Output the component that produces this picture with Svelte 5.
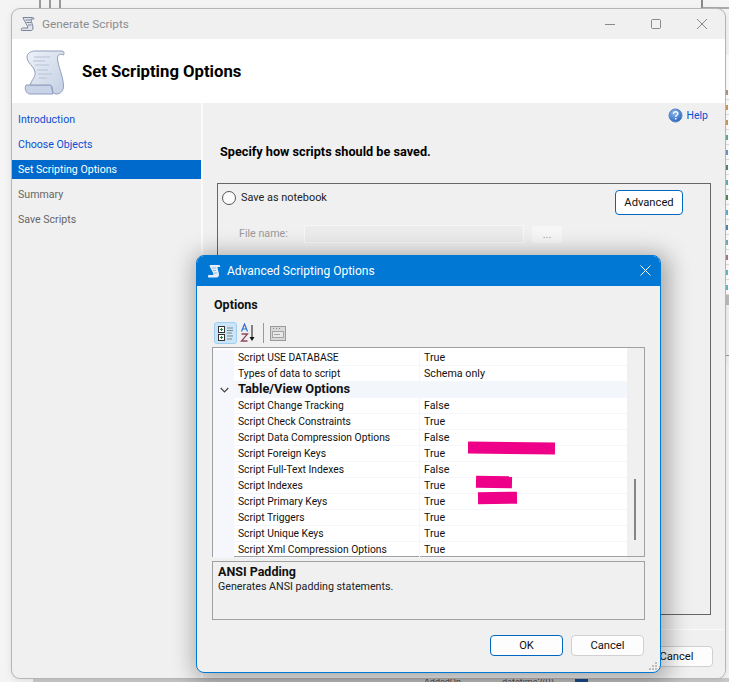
<script>
  const steps = [
    { label: 'Introduction', cls: 'link' },
    { label: 'Choose Objects', cls: 'link' },
    { label: 'Set Scripting Options', cls: 'active' },
    { label: 'Summary', cls: '' },
    { label: 'Save Scripts', cls: '' }
  ];
  const rows = [
    { n: 'Script USE DATABASE', v: 'True' },
    { n: 'Types of data to script', v: 'Schema only' },
    { n: 'Table/View Options', head: true },
    { n: 'Script Change Tracking', v: 'False' },
    { n: 'Script Check Constraints', v: 'True' },
    { n: 'Script Data Compression Options', v: 'False' },
    { n: 'Script Foreign Keys', v: 'True' },
    { n: 'Script Full-Text Indexes', v: 'False' },
    { n: 'Script Indexes', v: 'True' },
    { n: 'Script Primary Keys', v: 'True' },
    { n: 'Script Triggers', v: 'True' },
    { n: 'Script Unique Keys', v: 'True' },
    { n: 'Script Xml Compression Options', v: 'True' }
  ];
  const ticks = ['#a98','#c96','#c96','#6a8','#69c','#586','#6ab','#585','#6ac','#58a','#7ab','#a78','#6bb','#6bb'];
</script>

<div class="desk">
  <div class="bars"><i></i><i></i><i></i></div>
  <div class="corner"></div>
  <div class="strip">
    <div class="strip-top"></div>
    {#each ticks as t}
      <div class="tick"><b style="background:{t}"></b></div>
    {/each}
    <div class="strip-end"></div>
  </div>
  <div class="under">
    <span class="u1">AddedOn</span><span class="u2">datetime2(0)</span><span class="u3"></span>
  </div>

  <section class="win">
    <header class="title">
      <svg class="ttl-ic" width="16" height="16" viewBox="0 0 16 16">
        <path d="M3 1.500h9.500c1 0 1.500.6 1.500 1.500h-3c.2 3 2 6 2 9 0 1.500-.8 2.500-2 2.500H1.500c-.6-1.200-.2-2.500 1-2.500h5.500C7.500 9 4.500 6 3 1.500z" fill="#dfe4ee" stroke="#7a8496"/>
        <path d="M5.500 4h5M6.500 6.500h4.500M8 9h3.500" stroke="#7a8496"/>
      </svg>
      <span class="ttl-text">Generate Scripts</span>
      <div class="caps">
        <svg width="12" height="12" viewBox="0 0 12 12"><path d="M1 6.500h10" stroke="#8a8a8a"/></svg>
        <svg width="12" height="12" viewBox="0 0 12 12"><rect x="1.500" y="1.500" width="9" height="9" rx="1" fill="none" stroke="#8a8a8a"/></svg>
        <svg width="12" height="12" viewBox="0 0 12 12"><path d="M1 1l10 10M11 1L1 11" stroke="#8a8a8a"/></svg>
      </div>
    </header>
    <div class="banner">
      <svg class="scroll" width="42" height="46" viewBox="0 0 42 46">
        <defs>
          <linearGradient id="sg" x1="0" x2="1" y1="0" y2="1">
            <stop offset="0" stop-color="#eef2f9"/><stop offset="1" stop-color="#c3cfe3"/>
          </linearGradient>
        </defs>
        <path d="M2 36h25l2 9H6c-4 0-6-6-4-9z" fill="#c9d4e8" stroke="#8f9dbb"/>
        <path d="M11 2h27c2 0 2.500 2 1.500 4-3-1.500-6-.5-6 3 0 7 6 19 6 28 0 5-3 8-7 8-3 0-4-2-4-5 0-2-1-4-3-4H6c2-6 6-8 5-13C10 17 3 14 3 8c0-3 3-6 8-6z" fill="url(#sg)" stroke="#8f9dbb"/>
        <path d="M10 8h16M9 12h12M11 16h14M13 21h11M14 25h14M15 29h8" stroke="#b5c1d6" stroke-width="1.200"/>
      </svg>
      <h1>Set Scripting Options</h1>
    </div>
    <div class="main">
      <nav class="side">
        {#each steps as s}
          <div class="step {s.cls}">{s.label}</div>
        {/each}
      </nav>
      <div class="content">
        <div class="help">
          <svg width="15" height="15" viewBox="0 0 15 15">
            <defs><radialGradient id="hg" cx=".4" cy=".3" r=".8"><stop offset="0" stop-color="#8fb8ee"/><stop offset="1" stop-color="#1f5cb8"/></radialGradient></defs>
            <circle cx="7.500" cy="7.500" r="6.500" fill="url(#hg)" stroke="#5a83c4"/>
            <path d="M5.300 5.800c.2-1.400 1.200-2 2.300-2 1.300 0 2.200.8 2.200 1.900 0 1.600-2.100 1.600-2.100 3.200" fill="none" stroke="#fff" stroke-width="1.400"/>
            <rect x="6.900" y="10" width="1.500" height="1.500" fill="#fff"/>
          </svg>
          <span>Help</span>
        </div>
        <p class="spec">Specify how scripts should be saved.</p>
        <div class="group">
          <div class="opt-row">
            <span class="radio"></span>
            <span class="opt">Save as notebook</span>
            <button class="btn adv">Advanced</button>
          </div>
          <div class="file-row">
            <span class="fname">File name:</span>
            <span class="input"></span>
            <span class="dots">...</span>
          </div>
        </div>
        <div class="foot-rule"></div>
        <div class="foot"><button class="btn cancel-back">Cancel</button></div>
      </div>
    </div>
  </section>

  <section class="dlg">
    <header class="dlg-title">
      <svg width="16" height="16" viewBox="0 0 16 16">
        <path d="M4 2h9c1 0 1.500 1 1 2h-2.500c0 3 1.500 5 1.500 7.500 0 1.800-.8 3-2.300 3H2.500C1.500 14 1.800 12 3 12h4.500C7.500 9 4.500 6 3.500 2.500z" fill="#e6eff9"/>
        <path d="M6 5h4M7 7.500h3M8 10h3" stroke="#8fb4dc"/>
      </svg>
      <span>Advanced Scripting Options</span>
      <svg class="dlg-x" width="11" height="11" viewBox="0 0 11 11"><path d="M.5.500l10 10M10.500.500l-10 10" stroke="#fff"/></svg>
    </header>
    <div class="dlg-body">
      <div class="opts">Options</div>
      <div class="tools">
        <span class="tool on">
          <svg width="18" height="18" viewBox="0 0 18 18">
            <rect x="1.500" y="2.500" width="6" height="6" fill="#fff" stroke="#333"/>
            <rect x="1.500" y="10.500" width="6" height="6" fill="#fff" stroke="#333"/>
            <path d="M3 5.500h3M4.500 4v3M3 13.500h3M4.500 12v3" stroke="#1c8a3a"/>
            <path d="M10 4h6M10 6.500h6M10 9h5M10 12h6M10 15h5" stroke="#7a8a8a"/>
          </svg>
        </span>
        <span class="tool">
          <svg width="18" height="20" viewBox="0 0 18 20">
            <path d="M1.500 8.500L4.500 1l3 7.500M2.800 6h3.400" fill="none" stroke="#2a6fd0" stroke-width="1.200"/>
            <path d="M1.500 11h6l-6 7h6" fill="none" stroke="#8a4a5a" stroke-width="1.300"/>
            <path d="M12 2v13" stroke="#111"/>
            <path d="M9.500 14l2.500 4 2.500-4z" fill="#111"/>
          </svg>
        </span>
        <span class="sep"></span>
        <span class="pages">
          <svg width="16" height="15" viewBox="0 0 16 15">
            <rect x=".5" y=".5" width="15" height="14" fill="#d8d8d8" stroke="#9a9a9a"/>
            <path d="M3 2.500h1M6 2.500h1M9 2.500h1" stroke="#888"/>
            <rect x="2.500" y="5.500" width="11" height="6" fill="#e8e8e8" stroke="#a5a5a5"/>
            <path d="M4 8.500h6" stroke="#a5a5a5"/>
          </svg>
        </span>
      </div>
      <div class="grid">
        <div class="table">
          {#each rows as r}
            {#if r.head}
              <div class="row head">
                <span class="gut">
                  <svg width="9" height="6" viewBox="0 0 9 6"><path d="M.7 1l3.800 3.800L8.300 1" fill="none" stroke="#444" stroke-width="1.200"/></svg>
                </span>
                <span class="hname">{r.n}</span>
              </div>
            {:else}
              <div class="row">
                <span class="gut"></span>
                <span class="name">{r.n}</span>
                <span class="val">{r.v}</span>
              </div>
            {/if}
          {/each}
          <div class="marks">
            <i class="m1"></i><i class="m2"></i><i class="m3"></i>
          </div>
        </div>
        <div class="track"><span class="thumb"></span></div>
      </div>
      <div class="desc">
        <strong>ANSI Padding</strong>
        <span>Generates ANSI padding statements.</span>
      </div>
      <div class="actions">
        <button class="btn ok">OK</button>
        <button class="btn plain">Cancel</button>
      </div>
    </div>
    <svg class="grip" width="9" height="9" viewBox="0 0 9 9" fill="#bdbdbd">
      <rect x="6" y="0" width="2" height="2"/><rect x="3" y="3" width="2" height="2"/><rect x="6" y="3" width="2" height="2"/>
      <rect x="0" y="6" width="2" height="2"/><rect x="3" y="6" width="2" height="2"/><rect x="6" y="6" width="2" height="2"/>
    </svg>
  </section>
</div>

<style>
  :global(body) { margin: 0; }
  * { box-sizing: border-box; }
  .desk {
    position: relative; width: 729px; height: 682px; overflow: hidden;
    background: #f4f4f4;
    font-family: Roboto, "Noto Sans", sans-serif; font-size: 10.700px; color: #111;
  }
  .bars { position: absolute; left: 39px; top: 0; display: flex; gap: 8px; }
  .bars i { width: 2px; height: 9px; background: #9a9a9a; }
  .corner { position: absolute; left: 701px; top: 0; width: 28px; height: 9px; border-left: 2px solid #888; border-bottom: 2px solid #aaa; }
  .strip { position: absolute; left: 725px; top: 55px; width: 4px; display: flex; flex-direction: column; background: #fff; }
  .strip-top { height: 30px; }
  .tick { height: 15px; border-bottom: 1px solid #ddd; padding-top: 5px; }
  .tick b { display: block; width: 3px; height: 5px; }
  .strip-end { height: 70px; background: linear-gradient(#bbb 0 10px, #f0f0f0 10px 60px, #999 60px 61px, #f0f0f0 61px); }
  .under { position: absolute; left: 33px; top: 678px; width: 696px; height: 4px; background: #c9c9c9; overflow: hidden; }
  .under span { position: absolute; top: 0; font-size: 9px; line-height: 9px; color: #5a4a4a; }
  .u1 { left: 391px; } .u2 { left: 469px; }
  .under .u3 { left: 542px; width: 13px; height: 4px; background: #1b4f8f; }

  .win {
    position: absolute; left: 12px; top: 9px; width: 713px; height: 669px;
    display: flex; flex-direction: column; background: #f0f0f0;
    border-radius: 8px; box-shadow: 0 0 0 1px #b5b5b5, 0 2px 8px rgba(0,0,0,.1);
    overflow: hidden;
  }
  .title { height: 30px; flex: none; display: flex; align-items: center; padding-left: 8px; gap: 6px; color: #8c8c8c; font-size: 11.800px; }
  .ttl-ic { flex: none; }
  .caps { margin-left: auto; display: flex; gap: 34px; padding-right: 17px; }
  .banner { height: 64px; flex: none; background: #fff; display: flex; align-items: center; padding-left: 12px; }
  .scroll { flex: none; margin-top: 1px; }
  h1 { margin: 0 0 0 16px; font-size: 16.700px; font-weight: 700; color: #000; }
  .main { flex: 1; display: flex; min-height: 0; }
  .side { width: 189px; flex: none; padding-top: 7px; display: flex; flex-direction: column; gap: 6px; }
  .step { height: 19px; line-height: 19px; padding-left: 6px; color: #666; font-size: 10.600px; }
  .step.link { color: #0a4fd0; }
  .step.active { background: #0069cc; color: #fff; }
  .content { flex: 1; border-left: 2px solid #fbfbfb; display: flex; flex-direction: column; position: relative; background: #f0f0f0; }
  .help { display: flex; justify-content: flex-end; align-items: center; gap: 3px; padding: 5px 17px 0 0; height: 20px; color: #0a4fd0; font-size: 10.500px; }
  .spec { margin: 21px 0 0 17px; height: 16px; line-height: 16px; font-weight: 700; font-size: 12.700px; color: #000; }
  .group { margin: 23px 14px 0 14px; height: 432px; border: 1px solid #666; padding: 6px 27px 0 4px; flex: none; }
  .opt-row { display: flex; align-items: flex-start; height: 25px; }
  .radio { width: 14px; height: 14px; margin-top: 1px; border: 1px solid #555; border-radius: 50%; background: #fbfbfb; flex: none; }
  .opt { margin-left: 5px; line-height: 15px; color: #222; font-size: 10.900px; }
  .btn { font: inherit; font-size: 11.200px; color: #111; border-radius: 4px; padding: 0; background: #fdfdfd; border: 1px solid #d0d0d0; }
  .adv { margin-left: auto; width: 68px; height: 25px; border: 1px solid #0067c0; background: #fff; }
  .file-row { display: flex; align-items: center; margin-top: 10px; padding-left: 17px; height: 18px; }
  .fname { width: 65px; color: #9a9a9a; line-height: 16px; height: 17px; }
  .input { width: 220px; height: 18px; background: #ececec; border: 1px solid #f7f7f7; }
  .dots { margin-left: 8px; width: 30px; height: 17px; border-radius: 3px; background: #f6f6f6; color: #999; text-align: center; line-height: 17px; }
  .foot-rule { margin-top: 14px; height: 1px; background: #fafafa; }
  .foot { display: flex; justify-content: flex-end; padding: 16px 12px 0 0; }
  .cancel-back { width: 73px; height: 21px; }

  .dlg {
    position: absolute; left: 196px; top: 255px; width: 465px; height: 418px;
    background: #f0f0f0; border-radius: 8px; border: 1px solid #0078d4;
    box-shadow: 3px 3px 22px 5px rgba(0,0,0,.3);
    display: flex; flex-direction: column; overflow: hidden;
  }
  .dlg-title { height: 31px; flex: none; background: #0078d4; color: #fff; display: flex; align-items: center; padding-left: 10px; gap: 5px; font-size: 12px; margin: -1px -1px 0; }
  .dlg-x { margin-left: auto; margin-right: 10px; }
  .dlg-body { flex: 1; display: flex; flex-direction: column; padding: 11px 15px 0 15px; min-height: 0; }
  .opts { font-weight: 700; line-height: 16px; color: #111; padding-left: 2px; font-size: 12.500px; }
  .tools { display: flex; align-items: center; height: 22px; margin-top: 9px; padding-left: 2px; }
  .tool { width: 23px; height: 22px; display: flex; align-items: center; justify-content: center; border-radius: 3px; }
  .tool.on { background: #cce4f7; border: 1px solid #9ed0f5; }
  .sep { width: 1px; height: 20px; background: #999; margin: 0 6px 0 3px; }
  .pages { display: flex; }
  .grid { display: flex; height: 210px; margin-top: 3px; border: 1px solid #a0a0a0; padding-top: 2px; width: 433px; background: #fff; flex: none; }
  .table { position: relative; width: 414px; flex: none; }
  .row { display: flex; height: 16px; line-height: 15px; border-bottom: 1px solid #f3f6fb; color: #111; font-size: 10.300px; }
  .gut { width: 21px; flex: none; background: #f5f7fc; display: flex; align-items: center; justify-content: center; padding-left: 2px; }
  .name { width: 186px; padding-left: 4px; flex: none; border-right: 1px solid #f3f6fb; }
  .val { padding-left: 4px; font-size: 10.700px; }
  .row.head { background: #f3f6fb; }
  .hname { padding-left: 4px; font-weight: 700; font-size: 12.800px; line-height: 14px; }
  .marks i { position: absolute; display: block; background: #ee0088; }
  .m1 { left: 255px; top: 92px; width: 87px; height: 12px; transform: rotate(.5deg); }
  .m2 { left: 263px; top: 126px; width: 36px; height: 12px; transform: rotate(1deg); }
  .m3 { left: 265px; top: 142px; width: 39px; height: 12px; transform: rotate(-1deg); }
  .track { flex: 1; background: #f0f0f0; position: relative; margin-top: -2px; }
  .thumb { position: absolute; left: 7px; top: 131px; width: 2px; height: 61px; background: #858585; }
  .desc { margin-top: 4px; height: 59px; width: 433px; border: 1px solid #a0a0a0; padding: 2px 5px; display: flex; flex-direction: column; flex: none; line-height: 15px; color: #222; }
  .desc strong { font-size: 12.500px; color: #111; line-height: 15px; }
  .actions { display: flex; gap: 8px; justify-content: flex-end; margin-top: 15px; padding-right: 1px; }
  .ok, .plain { width: 73px; height: 21px; }
  .ok { border: 1px solid #0067c0; background: #fdfdfd; }
  .grip { position: absolute; right: 2px; bottom: 1px; }
</style>
